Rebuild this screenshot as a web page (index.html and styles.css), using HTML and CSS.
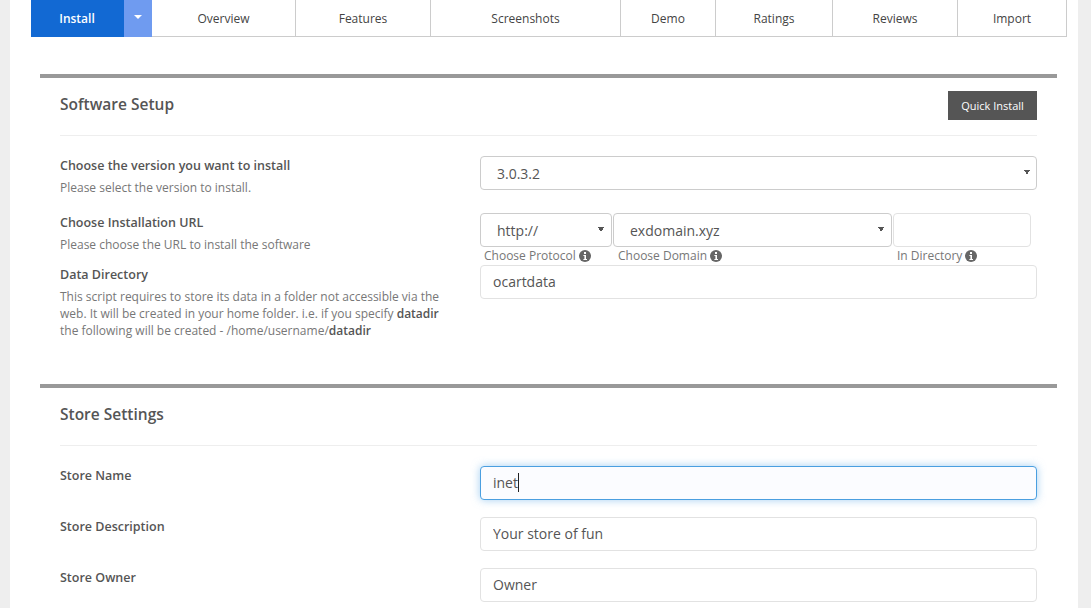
FILE: index.html
```html
<html lang="en">
<head>
    <meta charset="UTF-8">
    <meta name="viewport" content="width=device-width, initial-scale=1.0">
    <title>Install</title>
    <link rel="stylesheet" href="styles.css">
</head>
<body>
    <div class="page">
        <nav class="tabs">
            <a class="tab tab-install">Install</a>
            <a class="tab tab-caret"><span class="caret-down"></span></a>
            <a class="tab tab-overview">Overview</a>
            <a class="tab tab-features">Features</a>
            <a class="tab tab-screenshots">Screenshots</a>
            <a class="tab tab-demo">Demo</a>
            <a class="tab tab-ratings">Ratings</a>
            <a class="tab tab-reviews">Reviews</a>
            <a class="tab tab-import">Import</a>
        </nav>

        <section class="panel">
            <div class="panel-head">
                <h2>Software Setup</h2>
                <button class="quick-btn">Quick Install</button>
            </div>
            <div class="row row-version">
                <div class="row-text">
                    <label>Choose the version you want to install</label>
                    <p>Please select the version to install.</p>
                </div>
                <select class="field"><option>3.0.3.2</option></select>
            </div>
            <div class="row row-url">
                <div class="row-text">
                    <label>Choose Installation URL</label>
                    <p>Please choose the URL to install the software</p>
                </div>
                <div class="url-group">
                    <div class="url-protocol">
                        <select class="field"><option>http://</option></select>
                        <span class="hint">Choose Protocol
                            <svg class="info" viewBox="0 0 12 12"><circle cx="6" cy="6" r="6"/><rect x="5" y="2" width="2" height="2" class="info-i"/><path d="M4.4 5h2.6v4h1v1H4.4V9h1V6h-1z" class="info-i"/></svg>
                        </span>
                    </div>
                    <div class="url-domain">
                        <select class="field"><option>exdomain.xyz</option></select>
                        <span class="hint">Choose Domain
                            <svg class="info" viewBox="0 0 12 12"><circle cx="6" cy="6" r="6"/><rect x="5" y="2" width="2" height="2" class="info-i"/><path d="M4.4 5h2.6v4h1v1H4.4V9h1V6h-1z" class="info-i"/></svg>
                        </span>
                    </div>
                    <div class="url-dir">
                        <input class="field" type="text">
                        <span class="hint">In Directory
                            <svg class="info" viewBox="0 0 12 12"><circle cx="6" cy="6" r="6"/><rect x="5" y="2" width="2" height="2" class="info-i"/><path d="M4.4 5h2.6v4h1v1H4.4V9h1V6h-1z" class="info-i"/></svg>
                        </span>
                    </div>
                </div>
            </div>
            <div class="row row-datadir">
                <div class="row-text">
                    <label>Data Directory</label>
                    <p>This script requires to store its data in a folder not accessible via the web. It will be created in your home folder. i.e. if you specify <b>datadir</b> the following will be created - /home/username/<b>datadir</b></p>
                </div>
                <input class="field" type="text" value="ocartdata">
            </div>
        </section>

        <section class="panel">
            <div class="panel-head">
                <h2>Store Settings</h2>
            </div>
            <div class="row row-store">
                <div class="row-text"><label>Store Name</label></div>
                <div class="focus-wrap">
                    <input class="field field-active" type="text" value="inet">
                    <span class="text-caret"></span>
                </div>
            </div>
            <div class="row row-store">
                <div class="row-text"><label>Store Description</label></div>
                <input class="field" type="text" value="Your store of fun">
            </div>
            <div class="row row-store">
                <div class="row-text"><label>Store Owner</label></div>
                <input class="field" type="text" value="Owner">
            </div>
        </section>
    </div>
</body>
</html>
```

FILE: styles.css
```css
html, body {
    height: 100%;
}

body {
    margin: 0px;
    background-color: #eeeeee;
    font-family: "Open Sans", sans-serif;
    color: #555;
    overflow: hidden;
}

.page {
    background-color: white;
    margin: 0px 13px 0px 10px;
    padding: 0px 21px 0px 21px;
    height: 100%;
    box-sizing: border-box;
}

/* tabs */
.tabs {
    display: flex;
    height: 37px;
    margin-right: -10px;
    box-sizing: border-box;
    border-bottom: 1px solid #cccccc;
    border-right: 1px solid #cccccc;
}

.tab {
    display: flex;
    align-items: center;
    justify-content: center;
    box-sizing: border-box;
    font-size: 12px;
    color: #444;
    border-left: 1px solid #cccccc;
}

.tab-install {
    width: 93px;
    height: 37px;
    background-color: #1269d3;
    color: white;
    border-left: 0px;
    font-weight: 600;
    padding-right: 1px;
}

.tab-caret {
    width: 28px;
    height: 37px;
    background-color: #6f9bf0;
    border-left: 0px;
    padding-bottom: 3px;
}

.caret-down {
    width: 0px;
    height: 0px;
    border-left: 4px solid transparent;
    border-right: 4px solid transparent;
    border-top: 4px solid white;
}

.tab-overview { width: 143px; border-left: 0px; }
.tab-features { width: 135px; }
.tab-screenshots { width: 190px; }
.tab-demo { width: 95px; }
.tab-ratings { width: 117px; }
.tab-reviews { width: 125px; }
.tab-import { flex: 1; }

/* panels */
.panel {
    margin: 37px 0px 0px 9px;
    border-top: 4px solid #999999;
    padding: 0px 20px 0px 20px;
}

.panel + .panel {
    margin-top: 45px;
}

.panel-head {
    height: 57px;
    display: flex;
    align-items: center;
    justify-content: space-between;
    border-bottom: 1px solid #eeeeee;
    margin-bottom: 20px;
}

.panel-head h2 {
    margin: 0px 0px 6px 0px;
    font-size: 15.5px;
    font-weight: 600;
    color: #555;
}

.quick-btn {
    width: 89px;
    height: 29px;
    margin-bottom: 2px;
    border: 0px;
    padding: 0px;
    background-color: #555555;
    color: white;
    font-family: "Open Sans", sans-serif;
    font-size: 11px;
}

/* form rows */
.row {
    display: grid;
    grid-template-columns: 420px 557px;
}

.row-version {
    margin-bottom: 17px;
}

.row-store {
    margin-bottom: 17px;
}

.row-text {
    padding-right: 20px;
}

.row-text label {
    display: block;
    padding-top: 1px;
    font-size: 12.5px;
    line-height: 18px;
    font-weight: 600;
    color: #555;
}

.row-text p {
    margin: 4px 0px 0px 0px;
    font-size: 12px;
    line-height: 17px;
    color: #777;
}

.row-text b {
    font-weight: 600;
    color: #555;
}

.field {
    display: block;
    width: 100%;
    height: 34px;
    box-sizing: border-box;
    background-color: white;
    border: 1px solid #e2e2e2;
    border-radius: 4px;
    padding: 0px 12px 2px 12px;
    font-family: "Open Sans", sans-serif;
    font-size: 14px;
    color: #555;
    outline: none;
}

select.field {
    appearance: none;
    border-color: #cccccc;
    padding: 0px 12px 0px 16px;
    background-image: linear-gradient(to top right, transparent 50%, #555 50%), linear-gradient(to top left, transparent 50%, #555 50%);
    background-size: 3px 5px, 3px 5px;
    background-position: right 9px top 13px, right 6px top 13px;
    background-repeat: no-repeat;
}

.url-group select.field {
    background-position: right 10px top 13px, right 7px top 13px;
}

.field-active {
    background-color: #fbfcff;
    border-color: #4a9fe0;
    box-shadow: 0px 0px 8px rgba(102, 175, 233, .6);
}

.focus-wrap {
    position: relative;
}

.text-caret {
    position: absolute;
    left: 38px;
    top: 7px;
    width: 1px;
    height: 19px;
    background-color: #222;
}

/* url group */
.row-url {
    height: 52px;
}

.url-group {
    display: flex;
}

.url-protocol { width: 132px; margin-right: 1px; }
.url-domain { width: 279px; margin-right: 1px; }
.url-dir { width: 138px; }

.hint {
    display: block;
    height: 18px;
    line-height: 18px;
    font-size: 12px;
    color: #777;
    padding-left: 4px;
    white-space: nowrap;
}

.url-domain .hint { padding-left: 5px; }

.info {
    width: 12px;
    height: 12px;
    vertical-align: -2px;
    margin-left: 0px;
    fill: #666;
}

.info .info-i {
    fill: white;
}
```
